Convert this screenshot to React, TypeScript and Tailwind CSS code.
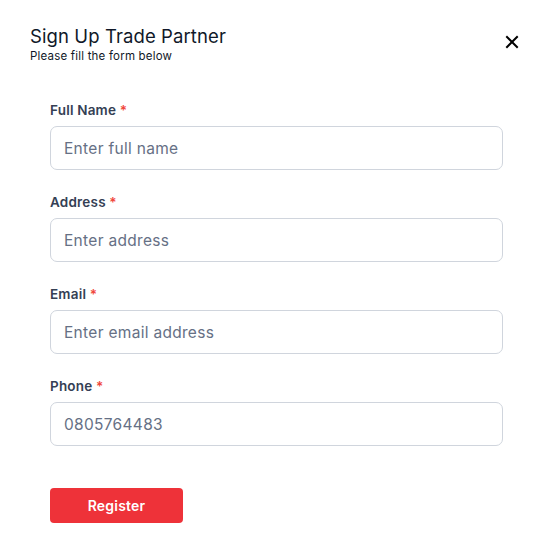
import { useState } from 'react'

const fields = [
  { label: 'Full Name', placeholder: 'Enter full name', value: '' },
  { label: 'Address', placeholder: 'Enter address', value: '' },
  { label: 'Email', placeholder: 'Enter email address', value: '' },
  { label: 'Phone', placeholder: 'Enter phone number', value: '0805764483' },
]

export default function App() {
  const [values, setValues] = useState(fields.map((f) => f.value))

  return (
    <div className="min-h-screen bg-white font-['Inter',sans-serif] text-[#101828]">
      <div className="w-[554px] h-[557px] relative">
        {/* Header */}
        <div className="flex items-start justify-between pl-[30px] pr-[35px] pt-[25px]">
          <div>
            <h2 className="text-[18.5px] leading-[22px] font-normal tracking-[0.1px] text-[#101828]">Sign Up Trade Partner</h2>
            <p className="text-[11.5px] leading-[14px] tracking-[0.2px] text-[#101828] mt-[2px]">Please fill the form below</p>
          </div>
          <button className="mt-[10px] text-black">
            <svg width="14" height="14" viewBox="0 0 14 14" fill="none">
              <path d="M2 2L12 12M12 2L2 12" stroke="currentColor" strokeWidth="2" strokeLinecap="square" />
            </svg>
          </button>
        </div>

        {/* Form */}
        <form className="px-[50px] pt-[39px] w-[554px]" onSubmit={(e) => e.preventDefault()}>
          <div className="flex flex-col gap-[24px] pr-[1px]">
            {fields.map((field, i) => (
              <div key={field.label} className="flex flex-col gap-[8px]">
                <label className="text-[13.5px] leading-[16px] font-semibold tracking-[0.2px] text-[#344054]">
                  {field.label} <span className="text-[#f04438]">*</span>
                </label>
                <input
                  className="h-[44px] w-full rounded-[7px] border border-[#d0d5dd] px-[13px] text-[15.5px] tracking-[0.3px] text-[#667085] placeholder:text-[#667085] outline-none"
                  placeholder={field.placeholder}
                  value={values[i]}
                  onChange={(e) => setValues(values.map((v, j) => (j === i ? e.target.value : v)))}
                />
              </div>
            ))}
          </div>
          <button
            type="submit"
            className="mt-[42px] h-[35px] w-[133px] rounded-[4px] bg-[#ee3239] text-white text-[14px] font-semibold tracking-[0.2px]"
          >
            Register
          </button>
        </form>
      </div>
    </div>
  )
}
